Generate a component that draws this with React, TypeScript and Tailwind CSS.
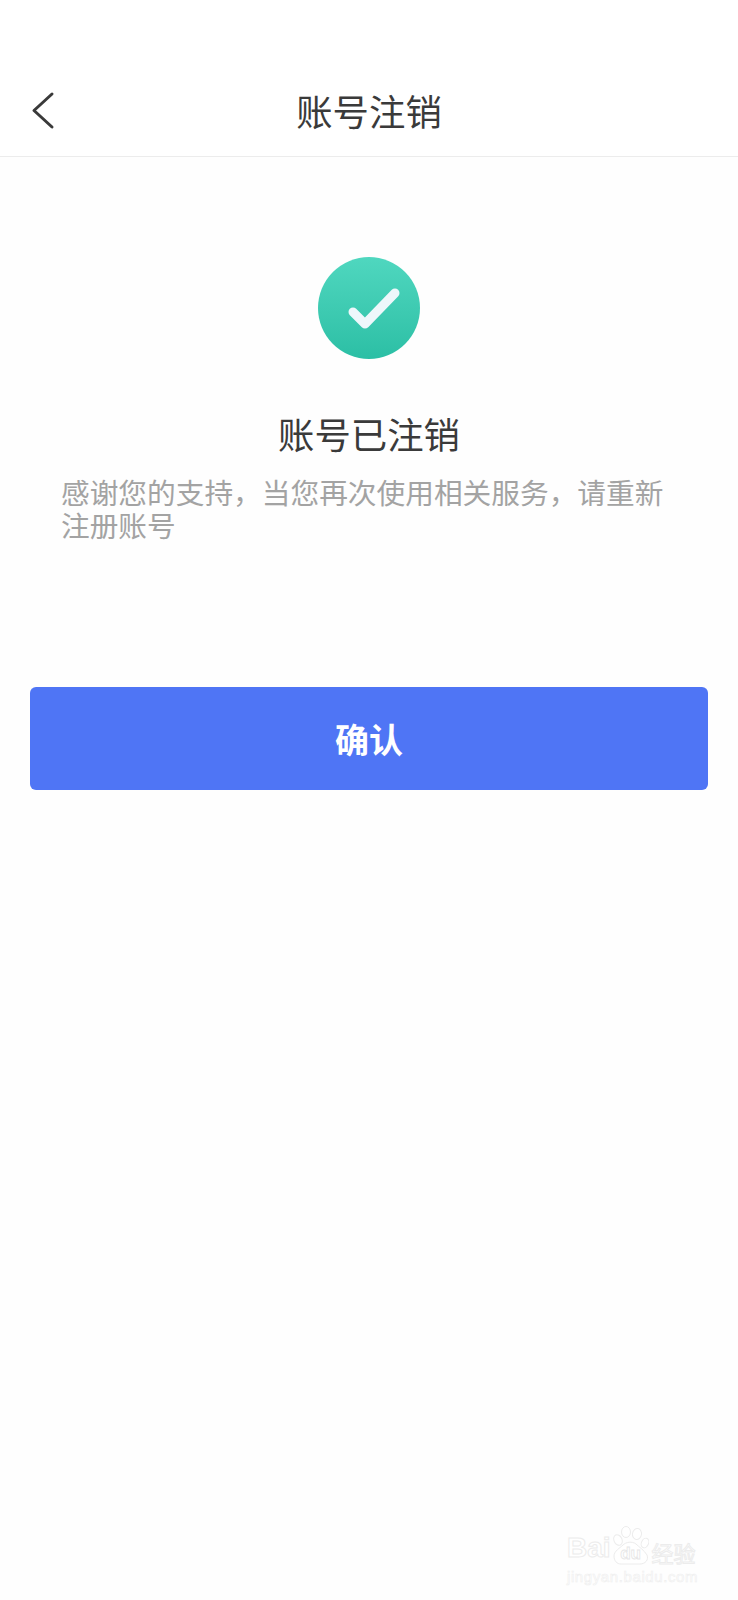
const CJK = "font-['Noto_Sans_CJK_SC','Liberation_Sans',sans-serif]";
const LATIN = "font-['Liberation_Sans',sans-serif]";

function BaiduWatermark() {
  return (
    <div className="absolute bottom-[16px] right-[40px] flex w-[131px] flex-col text-white [-webkit-text-stroke:1px_#ececec]">
      <div className="flex items-end">
        <span className={`mb-[3px] text-[28px] font-bold leading-none ${LATIN}`}>Bai</span>
        <div className="relative ml-[2px] h-[39px] w-[36px]">
          <svg width="36" height="39" viewBox="0 0 36 39" fill="#ffffff" stroke="#ececec" strokeWidth="1">
            <ellipse cx="5" cy="14" rx="4" ry="5.5" transform="rotate(-25 5 14)" />
            <ellipse cx="13" cy="6" rx="4.5" ry="5.5" />
            <ellipse cx="24" cy="8" rx="4.5" ry="5.5" transform="rotate(10 24 8)" />
            <ellipse cx="32" cy="17" rx="3.5" ry="5" transform="rotate(25 32 17)" />
            <path d="M1 30c0-5 6-8 9-11 3-3 9-4 13-1 3 3 8 6 11 11 2 5-2 9-7 9H8c-4 0-7-3-7-8z" />
          </svg>
          <span className={`absolute inset-x-0 bottom-[3px] text-center text-[17px] font-bold leading-none ${LATIN} [-webkit-text-stroke:0.8px_#e6e6e6]`}>du</span>
        </div>
        <span className={`mb-[2px] ml-[3px] whitespace-nowrap text-[22px] leading-none ${CJK}`}>经验</span>
      </div>
      <span className={`mt-[4px] whitespace-nowrap text-[15px] leading-none tracking-[0.6px] ${LATIN} [-webkit-text-stroke:0.6px_#efefef]`}>jingyan.baidu.com</span>
    </div>
  );
}

export default function App() {
  return (
    <div className={`relative min-h-[1600px] w-[738px] bg-[#fefefe] ${CJK}`}>
      {/* Header */}
      <header className="grid h-[157px] grid-cols-[1fr_auto_1fr] items-end border-b border-[#ececec] bg-white pb-[21px]">
        <button className="mb-[5px] pl-[31px] text-left text-[#3a3a3a]" aria-label="Back">
          <svg width="24" height="40" viewBox="0 0 24 40" fill="none" stroke="currentColor" strokeWidth="3" strokeLinecap="round" strokeLinejoin="round">
            <path d="M21 4 3 20.5 21 37" />
          </svg>
        </button>
        <h1 className="text-[36.4px] font-normal leading-[50px] text-[#3a3a3a]">账号注销</h1>
      </header>

      <main className="flex flex-col items-center pt-[100px]">
        <div className="flex h-[102px] w-[102px] items-center justify-center rounded-full bg-gradient-to-b from-[#4fd7bf] to-[#2bbfa5]">
          <svg width="102" height="102" viewBox="0 0 102 102" fill="none" stroke="#eef7fb" strokeWidth="9" strokeLinecap="round" strokeLinejoin="round">
            <path d="M35 55 47 67 77 36" />
          </svg>
        </div>
        <h2 className="mt-[49px] text-[36.4px] font-normal leading-[50px] text-[#3a3a3a]">账号已注销</h2>
        <p className="mt-[18px] w-full pl-[61px] pr-[70px] text-[28.7px] leading-[32.5px] text-[#a3a3a3]">
          感谢您的支持，当您再次使用相关服务，请重新注册账号
        </p>
        <div className="mt-[146px] w-full px-[30px]">
          <button className="flex h-[103px] w-full items-center justify-center rounded-[6px] bg-[#4f75f5] text-[34px] font-bold text-white">
            确认
          </button>
        </div>
      </main>

      <BaiduWatermark />
    </div>
  );
}
